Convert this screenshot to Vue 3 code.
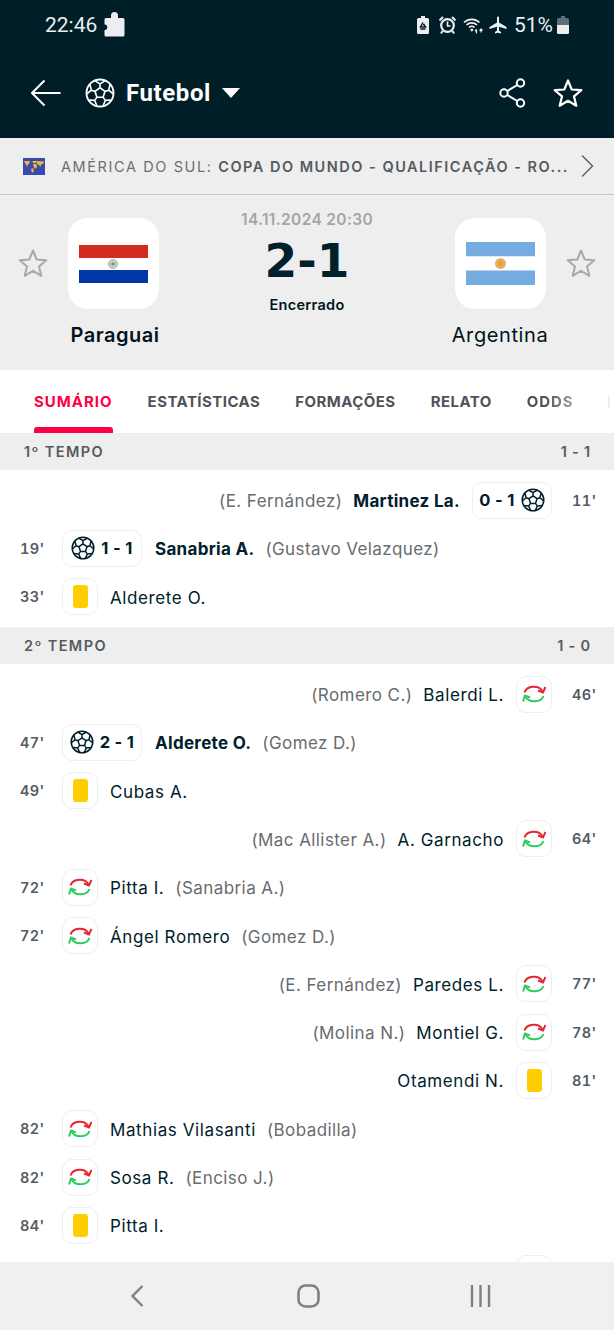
<script setup>
const ball = {
  seams: 'M12 7.8 16 10.7 14.47 15.4 9.53 15.4 8 10.7Z M12 7.8V4.7 M16 10.7 18.94 9.74 M14.47 15.4 16.29 17.9 M9.53 15.4 7.71 17.9 M8 10.7 5.06 9.74 M8.07 2.26 12 4.7 15.93 2.26 M20.04 5.25 18.94 9.74 22.47 12.73 M20.9 17.56 16.29 17.9 14.54 22.19 M9.46 22.19 7.71 17.9 3.1 17.56 M1.53 12.73 5.06 9.74 3.96 5.25'
}
const half1 = [
  { side: 'r', time: "11'", type: 'goal', score: '0 - 1', name: 'Martinez La.', extra: '(E. Fernández)', bold: true },
  { side: 'l', time: "19'", type: 'goal', score: '1 - 1', name: 'Sanabria A.', extra: '(Gustavo Velazquez)', bold: true },
  { side: 'l', time: "33'", type: 'card', name: 'Alderete O.' }
]
const half2 = [
  { side: 'r', time: "46'", type: 'sub', name: 'Balerdi L.', extra: '(Romero C.)' },
  { side: 'l', time: "47'", type: 'goal', score: '2 - 1', name: 'Alderete O.', extra: '(Gomez D.)', bold: true },
  { side: 'l', time: "49'", type: 'card', name: 'Cubas A.' },
  { side: 'r', time: "64'", type: 'sub', name: 'A. Garnacho', extra: '(Mac Allister A.)' },
  { side: 'l', time: "72'", type: 'sub', name: 'Pitta I.', extra: '(Sanabria A.)' },
  { side: 'l', time: "72'", type: 'sub', name: 'Ángel Romero', extra: '(Gomez D.)' },
  { side: 'r', time: "77'", type: 'sub', name: 'Paredes L.', extra: '(E. Fernández)' },
  { side: 'r', time: "78'", type: 'sub', name: 'Montiel G.', extra: '(Molina N.)' },
  { side: 'r', time: "81'", type: 'card', name: 'Otamendi N.' },
  { side: 'l', time: "82'", type: 'sub', name: 'Mathias Vilasanti', extra: '(Bobadilla)' },
  { side: 'l', time: "82'", type: 'sub', name: 'Sosa R.', extra: '(Enciso J.)' },
  { side: 'l', time: "84'", type: 'card', name: 'Pitta I.' },
  { side: 'r', time: "", type: 'card', name: '' }
]
const sections = [
  { title: '1º TEMPO', score: '1 - 1', rows: half1 },
  { title: '2º TEMPO', score: '1 - 0', rows: half2 }
]
const tabs = ['SUMÁRIO', 'ESTATÍSTICAS', 'FORMAÇÕES', 'RELATO', 'ODDS']
</script>

<template>
  <div class="page">
    <header class="top">
      <div class="status">
        <div class="status-left">
          <span class="clock">22:46</span>
          <svg class="puzzle" viewBox="0 0 21 25" width="21" height="25"><path fill="#eceef0" d="M7 6V3.500a3.500 3.500 0 0 1 7 0V6h5a1.500 1.500 0 0 1 1.500 1.500V23a1.500 1.500 0 0 1-1.500 1.500H2A1.500 1.500 0 0 1 .5 23v-5h1a3 3 0 0 0 0-5.500h-1V7.500A1.500 1.500 0 0 1 2 6Z"/></svg>
        </div>
        <div class="status-right">
          <svg width="12" height="18" viewBox="0 0 12 18"><path fill="#eceef0" d="M4 0h4v2h2.500A1.500 1.500 0 0 1 12 3.500v13a1.500 1.500 0 0 1-1.500 1.500h-9A1.500 1.500 0 0 1 0 16.500v-13A1.500 1.500 0 0 1 1.500 2H4Z"/><path fill="none" stroke="#001e28" stroke-width="1.500" d="M6 6.500 3.500 11h5L6.500 8M3.500 13h5"/></svg>
          <svg class="s-alarm" width="17" height="18" viewBox="0 0 17 18"><circle cx="8.500" cy="9.500" r="6.300" fill="none" stroke="#eceef0" stroke-width="2.200"/><path d="M8.500 5.500v4.500h3" fill="none" stroke="#eceef0" stroke-width="1.600"/><path d="M.5 4.500 4 1M16.500 4.500 13 1M3.500 15 2 17.500M13.500 15 15 17.500" stroke="#eceef0" stroke-width="2" fill="none"/></svg>
          <svg class="s-wifi" width="21" height="18" viewBox="0 0 21 18"><path d="M1 6.500a11 11 0 0 1 15.500 0M3.500 9a7.500 7.500 0 0 1 10.500 0M6 11.500a4 4 0 0 1 5.500 0" fill="none" stroke="#eceef0" stroke-width="1.700"/><circle cx="8.800" cy="14" r="1.400" fill="#eceef0"/><path d="M13.500 13.500v4M12 15l1.500-1.500M18 12.500v4M16.500 14.500 18 13l1.500 1.500" stroke="#eceef0" stroke-width="1.200" fill="none"/></svg>
          <svg class="s-plane" width="18" height="18" viewBox="0 0 17 18"><path fill="#eceef0" d="M7.500 1.500a1 1 0 0 1 2 0V6.500l7.500 4.500v2L9.500 10.700v3.800l2 1.500V17.500L8.500 16.700 5.500 17.500V16l2-1.500V10.700L0 13v-2l7.500-4.500Z"/></svg>
          <span class="pct">51%</span>
          <svg class="s-batt" width="12" height="18" viewBox="0 0 12 18"><path fill="#5d6f78" d="M4 0h4v2h2.500A1.500 1.500 0 0 1 12 3.500V9H0V3.500A1.500 1.500 0 0 1 1.500 2H4Z"/><path fill="#eceef0" d="M0 9h12v7.500a1.500 1.500 0 0 1-1.500 1.500h-9A1.500 1.500 0 0 1 0 16.500Z"/></svg>
        </div>
      </div>
      <div class="toolbar">
        <svg class="back" width="30" height="28" viewBox="0 0 30 28"><path d="M29.500 14H1.500M13.500 1.500 1 14l12.500 12.500" fill="none" stroke="#fff" stroke-width="2"/></svg>
        <svg class="sport" width="30" height="30" viewBox="0 0 24 24"><circle cx="12" cy="12" r="10.800" fill="none" stroke="#fff" stroke-width="1.500"/><path :d="ball.seams" fill="none" stroke="#fff" stroke-width="1.300" stroke-linejoin="round"/></svg>
        <span class="sport-name">Futebol</span>
        <svg class="caret" width="18" height="10" viewBox="0 0 18 10"><path d="M0 0h18L9 10Z" fill="#fff"/></svg>
        <span class="grow"></span>
        <svg class="share" width="28" height="30" viewBox="0 0 28 30"><circle cx="21.500" cy="5" r="3.700" fill="none" stroke="#fff" stroke-width="2"/><circle cx="5" cy="15" r="3.700" fill="none" stroke="#fff" stroke-width="2"/><circle cx="21.500" cy="25" r="3.700" fill="none" stroke="#fff" stroke-width="2"/><path d="M18.300 7 8.200 13M8.200 17l10.100 6" stroke="#fff" stroke-width="2" fill="none"/></svg>
        <svg class="fav" width="30" height="30" viewBox="0 0 30 30"><path d="M15 2.500 18.700 11.500 28.300 12.200 21 18.400 23.300 27.800 15 22.800 6.700 27.800 9 18.400 1.700 12.200 11.300 11.500Z" fill="none" stroke="#fff" stroke-width="2.200" stroke-linejoin="round"/></svg>
      </div>
    </header>

    <div class="crumb">
      <svg class="world" width="22" height="17" viewBox="0 0 22 17"><rect width="22" height="17" fill="#3a4bb0"/><path fill="#f2b632" d="M1 3h6l-1 3-2 1 1.500 3L3 7ZM8 11l2-1 1 3-2 2ZM9.500 3h4l-.5 2h-3ZM10 6h3.500l.5 3-2 2-1.500-3ZM13.500 3 21 3.500 20 6l-2 .5-.5 2.500-1.500-2L14 6Z"/></svg>
      <span class="crumb-text">AMÉRICA DO SUL: <b>COPA DO MUNDO - QUALIFICAÇÃO - RO...</b></span>
      <svg class="chev" width="14" height="24" viewBox="0 0 14 24"><path d="M2 1.500 12.500 12 2 22.500" fill="none" stroke="#5f6468" stroke-width="1.500"/></svg>
    </div>

    <section class="match">
      <svg class="star" width="30" height="30" viewBox="0 0 30 30"><path d="M15 2.500 18.700 11.500 28.300 12.200 21 18.400 23.300 27.800 15 22.800 6.700 27.800 9 18.400 1.700 12.200 11.300 11.500Z" fill="none" stroke="#a9a9a9" stroke-width="2" stroke-linejoin="round"/></svg>
      <div class="team">
        <div class="logo">
          <svg width="69" height="38" viewBox="0 0 69 38"><rect width="69" height="13" fill="#d52b1e"/><rect y="13" width="69" height="12" fill="#fff"/><rect y="25" width="69" height="13" fill="#0038a8"/><circle cx="34" cy="19" r="4.500" fill="#c9d2c6" stroke="#a4aea4"/><circle cx="34" cy="19" r="1.800" fill="#7f9a7a"/></svg>
        </div>
        <div class="team-name strong">Paraguai</div>
      </div>
      <div class="center">
        <div class="date">14.11.2024 20:30</div>
        <div class="score">2-1</div>
        <div class="state">Encerrado</div>
      </div>
      <div class="team">
        <div class="logo">
          <svg width="69" height="43" viewBox="0 0 69 43"><rect width="69" height="14.500" fill="#74acdf"/><rect y="14.500" width="69" height="14" fill="#fff"/><rect y="28.500" width="69" height="14.500" fill="#74acdf"/><circle cx="34.500" cy="21.500" r="5.500" fill="#dfb27a"/><circle cx="34.500" cy="21.500" r="3" fill="#f0a516"/></svg>
        </div>
        <div class="team-name">Argentina</div>
      </div>
      <svg class="star" width="30" height="30" viewBox="0 0 30 30"><path d="M15 2.500 18.700 11.500 28.300 12.200 21 18.400 23.300 27.800 15 22.800 6.700 27.800 9 18.400 1.700 12.200 11.300 11.500Z" fill="none" stroke="#a9a9a9" stroke-width="2" stroke-linejoin="round"/></svg>
    </section>

    <nav class="tabs">
      <span v-for="(t, i) in tabs" :key="t" class="tab" :class="{ active: i === 0, fading: i === 4 }">{{ t }}</span>
      <span class="ghost"></span>
    </nav>

    <main class="feed">
      <section v-for="s in sections" :key="s.title">
        <div class="period"><span>{{ s.title }}</span><b>{{ s.score }}</b></div>
        <div class="rows">
          <div v-for="(r, i) in s.rows" :key="i" class="row" :class="r.side === 'r' ? 'right' : 'left'">
            <span class="time">{{ r.time }}</span>
            <span class="chip" :class="{ wide: r.type === 'goal' }">
              <template v-if="r.type === 'goal'">
                <svg class="ball" width="24" height="24" viewBox="0 0 24 24"><circle cx="12" cy="12" r="10.800" fill="none" stroke="#00202c" stroke-width="1.500"/><path :d="ball.seams" fill="none" stroke="#00202c" stroke-width="1.500" stroke-linejoin="round"/></svg>
                <b class="goal-score">{{ r.score }}</b>
              </template>
              <span v-else-if="r.type === 'card'" class="card"></span>
              <svg v-else width="24" height="24" viewBox="0 0 24 24"><path d="M2.500 10.500A9.500 7.500 0 0 1 20.500 9.500" fill="none" stroke="#e8262e" stroke-width="2"/><path d="M16 8.500 21 10.500 23.500 5" fill="none" stroke="#e8262e" stroke-width="2"/><path d="M21.500 14A9.500 7.500 0 0 1 3.500 14.500" fill="none" stroke="#2ecc5f" stroke-width="2"/><path d="M8 15.500 3 13.500 1 19.500" fill="none" stroke="#2ecc5f" stroke-width="2"/></svg>
            </span>
            <span class="name" :class="{ bold: r.bold }">{{ r.name }}</span>
            <span v-if="r.extra" class="extra">{{ r.extra }}</span>
          </div>
        </div>
      </section>
    </main>

    <footer class="navbar">
      <svg width="14" height="24" viewBox="0 0 14 24"><path d="M12.500 2 2.500 12l10 10" fill="none" stroke="#808080" stroke-width="2.400"/></svg>
      <svg width="23" height="24" viewBox="0 0 23 24"><rect x="1.500" y="1.500" width="20" height="21" rx="7" fill="none" stroke="#808080" stroke-width="2.600"/></svg>
      <svg width="21" height="22" viewBox="0 0 21 22"><path d="M2 0v22M10.500 0v22M19 0v22" stroke="#808080" stroke-width="2.400"/></svg>
    </footer>
  </div>
</template>

<style scoped>
.page {
  width: 614px;
  height: 1330px;
  display: flex;
  flex-direction: column;
  overflow: hidden;
  background: #fff;
  font-family: Inter, "Noto Sans", sans-serif;
  color: #00141e;
}
.top { background: #001e28; height: 138px; flex: none; }
.status {
  height: 50px;
  display: flex;
  align-items: center;
  justify-content: space-between;
  padding: 0 45px;
  color: #eceef0;
  font-family: Roboto, sans-serif;
}
.status-left { display: flex; align-items: center; gap: 7px; }
.clock { font-size: 21px; }
.puzzle { margin-top: -1px; }
.status-right { display: flex; align-items: center; }
.s-alarm { margin-left: 10px; }
.s-wifi { margin-left: 7px; }
.s-plane { margin-left: 5px; }
.s-batt { margin-left: 4px; }
.pct { font-size: 21px; margin-left: 7px; }
.toolbar { height: 88px; display: flex; align-items: center; padding: 0 31px; margin-top: -1px; }
.sport { margin-left: 24px; }
.sport-name { font-family: Roboto, sans-serif; font-weight: 700; font-size: 24px; color: #fff; margin-left: 11px; letter-spacing: .6px; }
.caret { margin-left: 11px; }
.grow { flex: 1; }
.fav { margin-left: 26px; }
.crumb {
  height: 57px;
  flex: none;
  box-sizing: border-box;
  background: #eeeeee;
  border-bottom: 1px solid #c8c8c8;
  display: flex;
  align-items: center;
  padding: 0 20px 0 20px;
  font-size: 14.500px;
  color: #6a6f73;
  letter-spacing: 1.600px;
  white-space: nowrap;
}
.world { margin: 0 16px 0 3px; }
.crumb-text { flex: 1; overflow: hidden; }
.crumb-text b { font-weight: 600; color: #555b60; letter-spacing: 1.500px; }
.match {
  height: 175px;
  flex: none;
  background: #eeeeee;
  display: grid;
  grid-template-columns: 65px 96px 1fr 96px 66px;
  align-items: start;
}
.star { justify-self: center; margin-top: 53px; }
.team { display: flex; flex-direction: column; align-items: center; padding-top: 23px; }
.logo {
  width: 91px;
  height: 91px;
  background: #fff;
  border-radius: 20px;
  display: flex;
  align-items: center;
  justify-content: center;
}
.team-name { font-size: 20px; margin-top: 14px; white-space: nowrap; letter-spacing: .6px; }
.team-name.strong { font-weight: 600; letter-spacing: .5px; margin-left: 4px; }
.center { display: flex; flex-direction: column; align-items: center; padding: 15px 0 0 1px; }
.date { font-size: 15.500px; font-weight: 600; color: #a5a5a5; letter-spacing: .35px; }
.score { font-family: "DejaVu Sans", sans-serif; font-weight: 700; font-size: 47px; line-height: 50px; margin-top: 7px; color: #00202c; }
.state { font-size: 14.500px; font-weight: 600; margin-top: 10px; letter-spacing: .3px; }
.tabs {
  height: 63px;
  flex: none;
  background: #fff;
  display: flex;
  gap: 35px;
  padding-left: 34px;
  box-sizing: border-box;
  overflow: hidden;
}
.tab {
  display: flex;
  align-items: center;
  font-size: 15px;
  font-weight: 700;
  color: #4e5358;
  letter-spacing: .45px;
  border-bottom: 6px solid transparent;
  padding-top: 6px;
  box-sizing: border-box;
}
.tab.active { color: #ff0046; position: relative; letter-spacing: 1px; }
.tab.active::after {
  content: "";
  position: absolute;
  left: 0;
  right: 0;
  bottom: -6px;
  height: 6px;
  background: #ff0046;
  border-radius: 3px 3px 0 0;
}
.tab.fading {
  letter-spacing: .9px;
  -webkit-mask-image: linear-gradient(90deg, #000 40%, rgba(0, 0, 0, .55) 100%);
  mask-image: linear-gradient(90deg, #000 40%, rgba(0, 0, 0, .55) 100%);
}
.ghost { width: 2px; height: 12px; background: #ececec; align-self: center; margin-top: 0; }
.feed { flex: 1; overflow: hidden; min-height: 0; }
.period {
  height: 37px;
  background: #eeeeee;
  display: flex;
  align-items: center;
  justify-content: space-between;
  padding: 0 23px 0 24px;
  font-size: 14.500px;
  font-weight: 600;
  color: #555b60;
  letter-spacing: 1.400px;
}
.period b { font-weight: 600; letter-spacing: .8px; }
.rows { padding: 6px 0; }
.row {
  height: 48.300px;
  display: flex;
  align-items: center;
  font-size: 17px;
  color: #00202c;
  white-space: nowrap;
  letter-spacing: .6px;
}
.row.left { padding-left: 19px; }
.row.right { flex-direction: row-reverse; padding-right: 18px; }
.time { width: 24px; font-size: 14.500px; font-weight: 600; color: #555b60; font-variant-numeric: tabular-nums; letter-spacing: .4px; }
.row.left .time { margin-right: 19px; padding-left: 1px; box-sizing: border-box; }
.row.right .time { margin-left: 20px; }
.chip {
  box-sizing: border-box;
  width: 36px;
  height: 37px;
  border: 1.500px solid #eeeeee;
  border-radius: 10px;
  display: inline-flex;
  align-items: center;
  justify-content: center;
  background: #fff;
}
.chip.wide { width: 80px; gap: 6px; }
.row.right .chip.wide { flex-direction: row-reverse; }
.goal-score { font-size: 16.500px; font-weight: 700; letter-spacing: .3px; color: #00202c; }
.card { width: 15px; height: 23px; background: #ffcd00; border-radius: 3px; }
.name, .extra { margin-top: 2px; }
.name { margin-left: 12px; }
.row.left .chip.wide + .name { margin-left: 13px; }
.row.right .name { margin-left: 0; margin-right: 12px; }
.name.bold { font-weight: 700; letter-spacing: .3px; }
.extra { color: #686c70; margin-left: 11px; letter-spacing: .42px; }
.row.right .extra { margin-left: 0; margin-right: 11px; }
.navbar {
  height: 68px;
  flex: none;
  background: #f0f0f0;
  display: grid;
  grid-template-columns: repeat(3, 172px);
  justify-content: center;
  justify-items: center;
  align-items: center;
  padding-left: 3px;
}
</style>
